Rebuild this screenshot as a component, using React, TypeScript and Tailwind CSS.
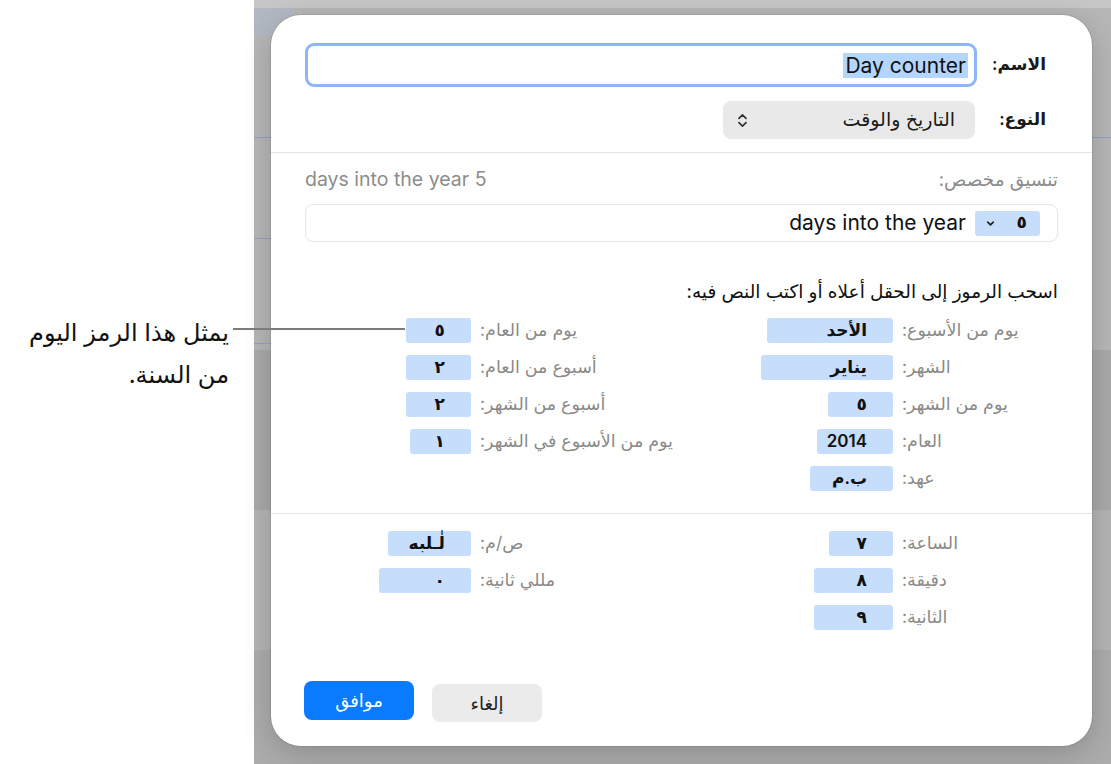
import React from "react";
import { ChevronsUpDown, ChevronDown } from "lucide-react";

const FONT = { fontFamily: '"Inter", "DejaVu Sans", "Noto Sans", sans-serif' };

type Row = { label: string; token: string; w: number };

const sec1Right: Row[] = [
  { label: "يوم من الأسبوع:", token: "الأحد", w: 126 },
  { label: "الشهر:", token: "يناير", w: 132 },
  { label: "يوم من الشهر:", token: "٥", w: 65 },
  { label: "العام:", token: "2014", w: 76 },
  { label: "عهد:", token: "ب.م", w: 83 },
];
const sec1Left: Row[] = [
  { label: "يوم من العام:", token: "٥", w: 65 },
  { label: "أسبوع من العام:", token: "٢", w: 65 },
  { label: "أسبوع من الشهر:", token: "٢", w: 65 },
  { label: "يوم من الأسبوع في الشهر:", token: "١", w: 61 },
];
const sec2Right: Row[] = [
  { label: "الساعة:", token: "٧", w: 64 },
  { label: "دقيقة:", token: "٨", w: 79 },
  { label: "الثانية:", token: "٩", w: 79 },
];
const sec2Left: Row[] = [
  { label: "ص/م:", token: "لٰـلبه", w: 83 },
  { label: "مللي ثانية:", token: "٠", w: 92 },
];

function Token({ text, w }: { text: string; w: number }) {
  return (
    <div
      className="h-[25px] rounded-[3px] bg-[#c6ddfb] flex items-center justify-start pr-[26px] text-[17px] font-semibold text-[#111]"
      style={{ width: w }}
    >
      {text}
    </div>
  );
}

function Group({ rows, right }: { rows: Row[]; right: boolean }) {
  return (
    <div
      className={
        right
          ? "grid grid-cols-[135px_132px] gap-x-[9px] auto-rows-[37px]"
          : "grid grid-cols-[200px_93px] gap-x-[9px] auto-rows-[37px]"
      }
    >
      {rows.map((r, i) => (
        <React.Fragment key={i}>
          <div className="flex items-center justify-end text-[17.5px] text-[#8a8a8a] whitespace-nowrap">
            {r.label}
          </div>
          <div className="flex items-center justify-start">
            <Token text={r.token} w={r.w} />
          </div>
        </React.Fragment>
      ))}
    </div>
  );
}

export default function App() {
  return (
    <div className="relative w-[1111px] h-[764px] overflow-hidden flex" style={FONT}>
      {/* left white area */}
      <div className="w-[254px] h-full bg-white" />
      {/* gray app background */}
      <div className="flex-1 h-full flex flex-col">
        <div className="h-[8px] bg-[#c6c6c6]" />
        <div className="h-[342px] flex bg-[#b6b6b6]">
          <div className="w-[40px] flex flex-col">
            <div className="h-[27px] bg-[#b2b8c2]" />
            <div className="h-[102px]" />
            <div className="h-px bg-[#8ea3c6]" />
            <div className="h-[100px]" />
            <div className="h-px bg-[#8ea3c6]" />
            <div className="h-[104px]" />
            <div className="h-px bg-[#8ea3c6]" />
          </div>
          <div className="flex-1 flex flex-col">
            <div className="h-[129px]" />
            <div className="h-px bg-[#8ea3c6]" />
          </div>
        </div>
        <div className="h-[160px] bg-[#a9a9a9]" />
        <div className="h-[140px] bg-[#b4b4b4]" />
        <div className="flex-1 bg-[#acacac]" />
      </div>

      {/* callout text */}
      <div
        dir="rtl"
        className="absolute left-0 top-[312px] w-[229px] text-right text-[24px] leading-[42px] text-[#111]"
      >
        <div className="whitespace-nowrap">يمثل هذا الرمز اليوم</div>
        <div>من السنة.</div>
      </div>

      {/* dialog */}
      <div
        dir="rtl"
        className="absolute left-[271px] top-[15px] w-[821px] h-[731px] rounded-[30px] bg-white shadow-[0_0_0_1px_rgba(0,0,0,0.08),0_8px_30px_rgba(0,0,0,0.18)] flex flex-col"
      >
        {/* name row */}
        <div className="mt-[28px] pr-[46px] pl-[34px] flex items-center">
          <div className="w-[51px] text-[17px] font-semibold text-[#1a1a1a] whitespace-nowrap">الاسم:</div>
          <div className="mr-[18px] flex-1 h-[44px] rounded-[9px] border-[3.5px] border-[#8db5f7] flex items-center pr-[6px]">
            <span dir="ltr" className="bg-[#b4d5fe] text-[21px] leading-[25px] px-[2px] text-[#111]">
              Day counter
            </span>
          </div>
        </div>

        {/* type row */}
        <div className="mt-[14px] pr-[46px] flex items-center">
          <div className="w-[51px] text-[17px] font-semibold text-[#1a1a1a] whitespace-nowrap">النوع:</div>
          <div className="mr-[20px] w-[252px] h-[38px] rounded-[8px] bg-[#e9e9e9] flex items-center justify-between pr-[20px] pl-[11px]">
            <span className="text-[19px] text-[#1a1a1a]">التاريخ والوقت</span>
            <ChevronsUpDown size={17} strokeWidth={2.4} className="text-[#333]" />
          </div>
        </div>

        <div className="mt-[13px] h-px bg-[#e3e3e3]" />

        {/* custom format */}
        <div className="mt-[17px] px-[34px] h-[20px] flex items-center justify-between text-[#8c8c8c]">
          <span className="text-[18.5px]">تنسيق مخصص:</span>
          <span dir="ltr" className="text-[19.5px]">days into the year 5</span>
        </div>
        <div className="mt-[14px] mx-[34px] h-[38px] rounded-[8px] border border-[#e6e6e6] flex items-center pr-[17px] gap-[9px]">
          <div className="w-[65px] h-[25px] rounded-[3px] bg-[#c6ddfb] flex items-center justify-between pr-[13px] pl-[10px]">
            <span className="text-[17px] font-semibold text-[#111]">٥</span>
            <ChevronDown size={11} strokeWidth={3.5} className="text-[#222]" />
          </div>
          <span dir="ltr" className="text-[21px] text-[#111]">days into the year</span>
        </div>

        {/* instructions */}
        <div className="mt-[39px] px-[34px] h-[22px] flex items-center text-[18.5px] text-[#111] whitespace-nowrap">
          اسحب الرموز إلى الحقل أعلاه أو اكتب النص فيه:
        </div>

        {/* date tokens */}
        <div className="mt-[9px] pr-[55px] flex items-start gap-[81px]">
          <Group rows={sec1Right} right />
          <Group rows={sec1Left} right={false} />
        </div>

        <div className="mt-[16px] h-px bg-[#e3e3e3]" />

        {/* time tokens */}
        <div className="mt-[11px] pr-[55px] flex items-start gap-[81px]">
          <Group rows={sec2Right} right />
          <Group rows={sec2Left} right={false} />
        </div>

        {/* buttons */}
        <div dir="ltr" className="mt-[45px] pl-[33px] flex items-start gap-[18px]">
          <button className="w-[110px] h-[39px] rounded-[8px] bg-[#0a7aff] text-white text-[18px]">
            موافق
          </button>
          <button className="mt-[3px] w-[110px] h-[38px] rounded-[8px] bg-[#ebebeb] text-[#222] text-[18px]">
            إلغاء
          </button>
        </div>
      </div>

      {/* callout line */}
      <div className="absolute left-[233px] top-[328px] w-[172px] h-[2px] bg-[#7c7c7c]" />
    </div>
  );
}
